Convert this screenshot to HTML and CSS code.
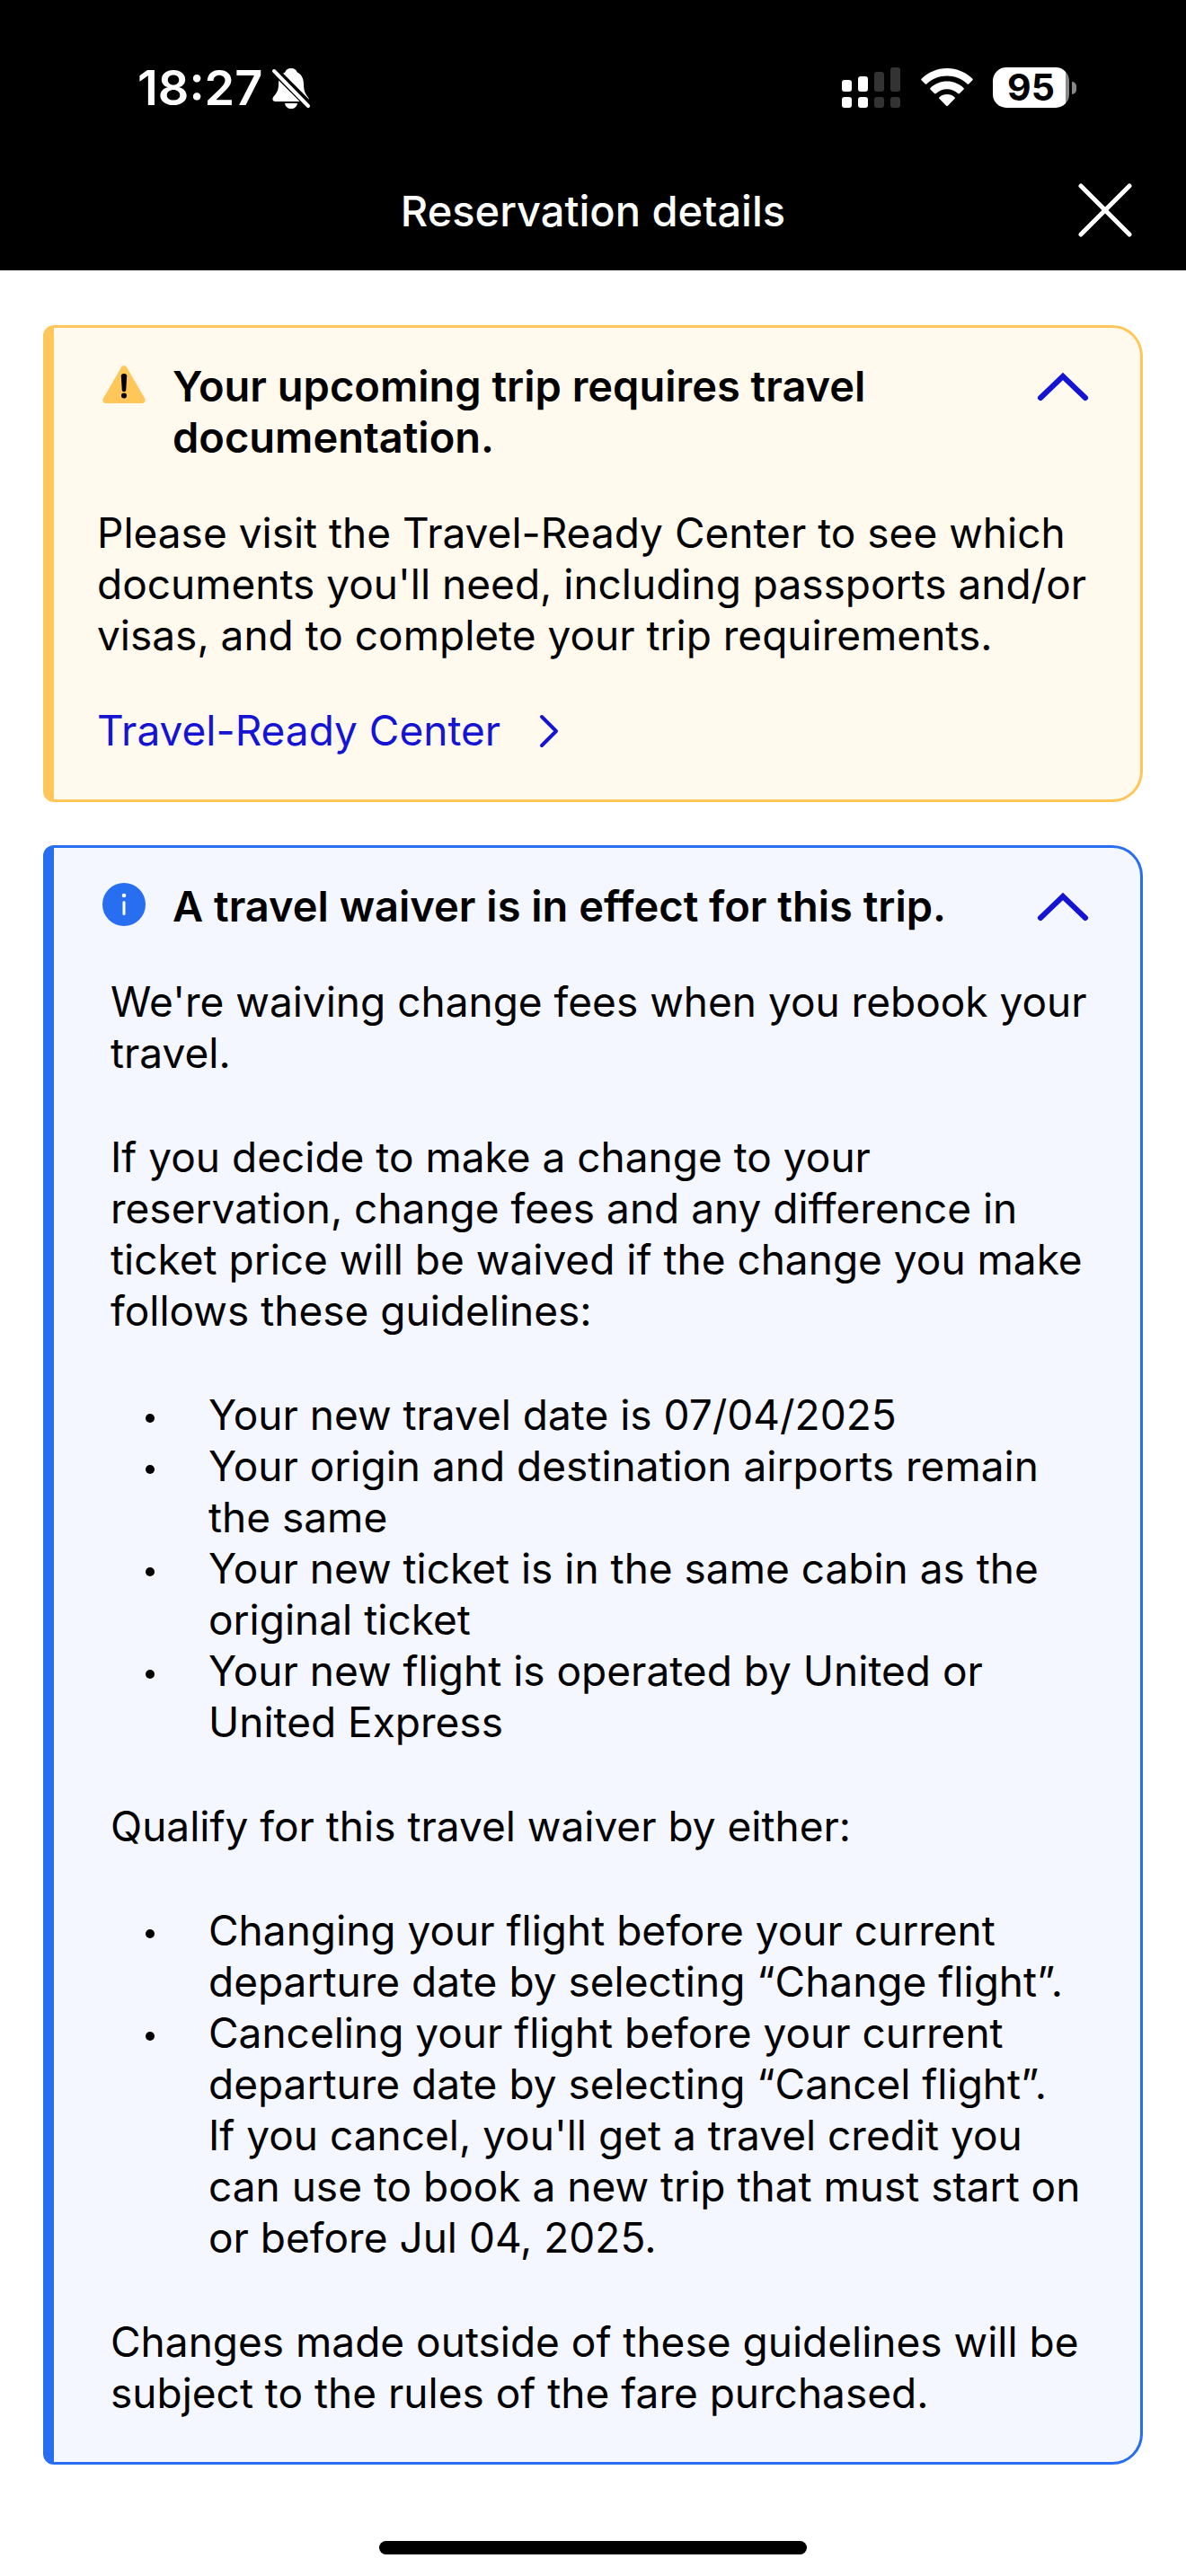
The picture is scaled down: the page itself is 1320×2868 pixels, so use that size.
FILE: index.html
```html
<!DOCTYPE html>
<html lang="en">
<head>
    <meta charset="UTF-8">
    <meta name="viewport" content="width=device-width, initial-scale=1.0">
    <title>Reservation details</title>
    <link rel="stylesheet" href="styles.css">
</head>
<body>
    <header class="top">
        <div class="status-bar">
            <div class="status-left">
                <span class="time">18:27</span>
                <svg class="bell" viewBox="0 0 44 48" width="44" height="48" aria-hidden="true">
                    <path fill="#fff" d="M22 2c3.5 0 6 1.800 6.800 4.500C34 9 36 14 36 20c0 8 2.500 11 5 14.500 1.800 2.500.500 4.500-2 4.500H4.500C1.500 39 .500 36 2.500 33.500 5.500 30 8 27 8 20c0-6 2-11 7.200-13.500C16 3.800 18.500 2 22 2z"/>
                    <path fill="#fff" d="M15 41h14c-.800 4-3.500 6-7 6s-6.200-2-7-6z"/>
                    <path stroke="#000" stroke-width="9" d="M0 1l44 44"/>
                    <path stroke="#fff" stroke-width="4" stroke-linecap="round" d="M3 5l38 39"/>
                </svg>
            </div>
            <div class="status-right">
                <svg viewBox="0 0 66 46" width="66" height="46" aria-hidden="true">
                    <g fill="#fff">
                        <rect x="0" y="14" width="11" height="13" rx="3"/>
                        <rect x="18" y="10" width="11" height="17" rx="3"/>
                        <rect x="0" y="33" width="11" height="12" rx="3"/>
                        <rect x="18" y="33" width="11" height="12" rx="3"/>
                    </g>
                    <g fill="#333">
                        <rect x="36" y="5" width="11" height="22" rx="3"/>
                        <rect x="54" y="0" width="11" height="27" rx="3"/>
                        <rect x="36" y="33" width="11" height="12" rx="3"/>
                        <rect x="54" y="33" width="11" height="12" rx="3"/>
                    </g>
                </svg>
                <svg viewBox="0 0 58 46" width="58" height="46" aria-hidden="true">
                    <path fill="#fff" d="M29 1C18 1 8 5.500.800 12.500c-.800.800-.800 1.200 0 2l3.800 3.800c.700.700 1.300.700 2 0C12.500 12.500 20.500 9.500 29 9.500s16.500 3 22.400 8.800c.700.700 1.300.700 2 0l3.800-3.800c.800-.800.800-1.200 0-2C50 5.500 40 1 29 1z"/>
                    <path fill="#fff" d="M29 15.500c-7 0-13.500 2.700-18.300 7.200-.800.800-.800 1.300 0 2l4.300 4.300c.600.600 1.200.600 1.900 0 3.300-3 7.500-4.800 12.100-4.800s8.800 1.800 12.100 4.800c.700.600 1.300.600 1.900 0l4.300-4.300c.800-.700.800-1.200 0-2-4.800-4.500-11.300-7.200-18.300-7.200z"/>
                    <path fill="#fff" d="M29 30c-3.300 0-6.200 1.200-8.400 3.200-.700.700-.700 1.200 0 1.900l7.300 7.300c.800.800 1.400.800 2.200 0l7.300-7.300c.700-.700.700-1.200 0-1.900C35.200 31.200 32.300 30 29 30z"/>
                </svg>
                <div class="battery"><span>95</span></div>
            </div>
        </div>
        <div class="nav-bar">
            <h1>Reservation details</h1>
            <button class="close" type="button" aria-label="Close">
                <svg viewBox="0 0 62 62" width="62" height="62" fill="none" stroke="#fff" stroke-width="5" stroke-linecap="round">
                    <path d="M4 4l54 54M58 4L4 58"/>
                </svg>
            </button>
        </div>
    </header>

    <main>
        <section class="card warning">
            <div class="card-header">
                <svg class="card-icon" viewBox="0 0 48 48" width="48" height="48" aria-hidden="true">
                    <path fill="#ffc65a" d="M20.800 5.200c1.200-2.900 5.200-2.900 6.400 0l20 34.600c1.300 2.500-.200 5.200-3 5.200H3.800c-2.800 0-4.300-2.700-3-5.200z"/>
                    <path d="M20.800 14.500c0-3.300 6.400-3.300 6.400 0l-1 16c-.200 2.200-4.200 2.200-4.400 0z"/>
                    <circle cx="24" cy="36.500" r="3"/>
                </svg>
                <h2>Your upcoming trip requires travel documentation.</h2>
                <button class="toggle" type="button" aria-label="Collapse" aria-expanded="true">
                    <svg viewBox="0 0 60 57" width="60" height="57" fill="none" stroke="#1414d2" stroke-width="6" stroke-linecap="round">
                        <path d="M6 42l25-24 25 24"/>
                    </svg>
                </button>
            </div>
            <div class="card-body">
                <p>Please visit the Travel-Ready Center to see which documents you'll need, including passports and/or visas, and to complete your trip requirements.</p>
                <a class="card-link" href="#">
                    Travel-Ready Center
                    <svg viewBox="0 0 24 40" width="24" height="40" fill="none" stroke="#1414d2" stroke-width="4" stroke-linecap="round" stroke-linejoin="round">
                        <path d="M4 4l16 16L4 36"/>
                    </svg>
                </a>
            </div>
        </section>

        <section class="card info">
            <div class="card-header">
                <svg class="card-icon" viewBox="0 0 48 48" width="48" height="48" aria-hidden="true">
                    <circle cx="24" cy="24" r="24" fill="#286ef0"/>
                    <circle cx="24" cy="14" r="2.300" fill="#fff"/>
                    <path stroke="#fff" stroke-width="3" stroke-linecap="round" d="M24 21.500v13"/>
                </svg>
                <h2>A travel waiver is in effect for this trip.</h2>
                <button class="toggle" type="button" aria-label="Collapse" aria-expanded="true">
                    <svg viewBox="0 0 60 57" width="60" height="57" fill="none" stroke="#1414d2" stroke-width="6" stroke-linecap="round">
                        <path d="M6 42l25-24 25 24"/>
                    </svg>
                </button>
            </div>
            <div class="card-body">
                <p>We're waiving change fees when you rebook your travel.</p>
                <p>If you decide to make a change to your reservation, change fees and any difference in ticket price will be waived if the change you make follows these guidelines:</p>
                <ul>
                    <li><span>Your new travel date is 07/04/2025</span></li>
                    <li><span>Your origin and destination airports remain the same</span></li>
                    <li><span>Your new ticket is in the same cabin as the original ticket</span></li>
                    <li><span>Your new flight is operated by United or United Express</span></li>
                </ul>
                <p>Qualify for this travel waiver by either:</p>
                <ul>
                    <li><span>Changing your flight before your current departure date by selecting “Change flight”.</span></li>
                    <li><span>Canceling your flight before your current departure date by selecting “Cancel flight”.<br>If you cancel, you'll get a travel credit you can use to book a new trip that must start on or before Jul 04, 2025.</span></li>
                </ul>
                <p>Changes made outside of these guidelines will be subject to the rules of the fare purchased.</p>
            </div>
        </section>
    </main>

    <div class="home-indicator"></div>
</body>
</html>
```
FILE: styles.css
```css
* {
    box-sizing: border-box;
}

body {
    display: flex;
    flex-direction: column;
    min-height: 100vh;
    margin: 0;
    background: #fff;
    color: #000;
    font-family: Inter, 'Liberation Sans', sans-serif;
    font-size: 46px;
    line-height: 57px;
}

h1, h2, p, ul {
    margin: 0;
    padding: 0;
}

h1, h2 {
    font-size: 47px;
}

svg {
    display: block;
    flex: none;
}

button {
    padding: 0;
    border: none;
    background: none;
    cursor: pointer;
}

/* Top bars */
.top {
    background: #000;
    color: #fff;
}

.status-bar {
    display: flex;
    justify-content: space-between;
    align-items: center;
    padding: 69px 122px 0 153px;
}

.status-left {
    display: flex;
    align-items: center;
    gap: 10px;
}

.time {
    font-size: 54px;
    font-weight: 600;
}

.status-right {
    display: flex;
    align-items: center;
    gap: 22px;
}

.battery {
    display: flex;
    align-items: center;
}

.battery span {
    width: 85px;
    border-radius: 15px;
    background: linear-gradient(to right, #fff 81px, #888 81px);
    color: #000;
    font-size: 41px;
    font-weight: 700;
    line-height: 45px;
    text-align: center;
}

.battery::after {
    content: '';
    width: 5px;
    height: 14px;
    margin-left: 3px;
    border-radius: 0 7px 7px 0;
    background: #888;
}

.nav-bar {
    display: grid;
    grid-template-columns: 62px 1fr 62px;
    align-items: center;
    padding: 77px 59px 36px;
}

.nav-bar h1 {
    grid-column: 2;
    font-weight: 500;
    text-align: center;
}

/* Cards */
main {
    display: flex;
    flex-direction: column;
    gap: 48px;
    padding: 61px 48px;
}

.card {
    padding: 36px 57px 48px 48px;
    border: 3px solid;
    border-left-width: 12px;
    border-radius: 12px 34px 34px 12px;
}

.warning {
    border-color: #ffc65a;
    background: #fffaed;
}

.info {
    border-color: #286ef0;
    background: #f4f7ff;
}

.card-header {
    display: flex;
    align-items: flex-start;
    margin-bottom: 50px;
    padding-left: 6px;
}

.card-icon {
    margin: 3px 30px 0 0;
}

.card-header h2 {
    flex: 1;
    font-weight: 600;
}

.card-body {
    display: flex;
    flex-direction: column;
    gap: 49px;
}

.info .card-body {
    gap: 59px;
    padding-left: 15px;
}

.card-link {
    display: flex;
    align-items: center;
    gap: 42px;
    color: #1414d2;
    text-decoration: none;
}

.card-body ul {
    list-style: none;
}

.card-body li {
    display: flex;
}

.card-body li::before {
    content: '';
    flex: none;
    width: 10px;
    height: 10px;
    margin: 27px 60px 0 39px;
    border-radius: 50%;
    background: #000;
}

.home-indicator {
    width: 36%;
    height: 15px;
    margin: auto auto 24px;
    border-radius: 8px;
    background: #000;
}
```
